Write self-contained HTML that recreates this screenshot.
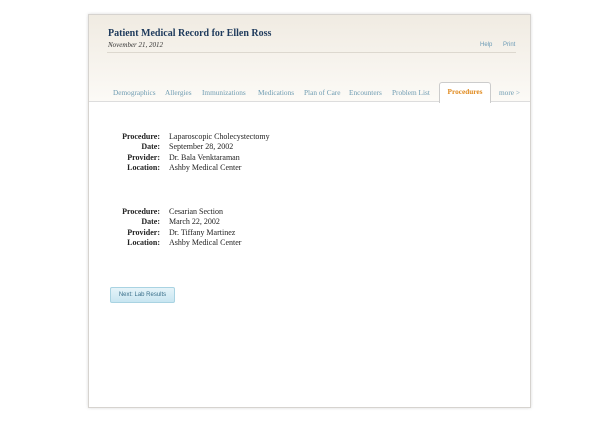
<!DOCTYPE html>
<html><head><style>
body{margin:0;width:615px;height:424px;background:#fff;position:relative;font-family:"Liberation Serif",serif;overflow:hidden}
.card{position:absolute;left:88px;top:14px;width:441px;height:392px;border:1px solid #d6d3cf;box-shadow:0 0 3px rgba(0,0,0,.15);background:#fff}
.hdr{position:absolute;left:0;top:0;width:441px;height:86px;background:linear-gradient(#f0ebe2,#fcfaf6)}
.t{position:absolute;left:19px;top:13px;font-size:10px;font-weight:bold;color:#1e3a5c}
.d{position:absolute;left:19px;top:26px;font-size:7px;font-style:italic;color:#333}
.line{position:absolute;left:18px;top:37px;width:409px;border-top:1px solid #ddd8cf}
.hp{position:absolute;top:27px;font-family:"Liberation Sans",sans-serif;font-size:6px;color:#6a9ab5}
.tab{position:absolute;top:73px;font-size:7.3px;color:#6f9cb2}
.act{position:absolute;left:350px;top:67px;width:50px;height:20px;background:#fff;border:1px solid #ccc;border-bottom:none;border-radius:3px 3px 0 0;color:#e08a1e;font-weight:bold;font-size:7.3px;text-align:center;line-height:18px}
.bl{position:absolute;left:0;top:86px;width:441px;border-top:1px solid #ddd}
.row{position:absolute;font-size:8px;color:#222;line-height:10.4px}
.btn{position:absolute;left:21px;top:272px;width:63px;height:14px;border:1px solid #a9d3e2;border-radius:2px;background:linear-gradient(#e6f4f9,#c8e6f1);font-family:"Liberation Sans",sans-serif;font-size:6px;color:#3a6f8a;text-align:center;line-height:14px}
</style></head><body>
<div class="card">
<div class="hdr"></div>
<div class="t">Patient Medical Record for Ellen Ross</div>
<div class="d">November 21, 2012</div>
<div class="hp" style="left:391px">Help</div><div class="hp" style="left:414px">Print</div>
<div class="line"></div>
<div class="bl"></div>
<div class="tab" style="left:24px">Demographics</div>
<div class="tab" style="left:76px">Allergies</div>
<div class="tab" style="left:113px">Immunizations</div>
<div class="tab" style="left:169px">Medications</div>
<div class="tab" style="left:215px">Plan of Care</div>
<div class="tab" style="left:260px">Encounters</div>
<div class="tab" style="left:303px">Problem List</div>
<div class="act">Procedures</div>
<div class="tab" style="left:410px">more &gt;</div>
<div class="row" style="left:0;top:117px;width:441px">
<div style="position:absolute;left:0;width:71px;text-align:right;font-weight:bold">Procedure:<br>Date:<br>Provider:<br>Location:</div>
<div style="position:absolute;left:80px;white-space:nowrap">Laparoscopic Cholecystectomy<br>September 28, 2002<br>Dr. Bala Venktaraman<br>Ashby Medical Center</div></div>
<div class="row" style="left:0;top:192px;width:441px">
<div style="position:absolute;left:0;width:71px;text-align:right;font-weight:bold">Procedure:<br>Date:<br>Provider:<br>Location:</div>
<div style="position:absolute;left:80px;white-space:nowrap">Cesarian Section<br>March 22, 2002<br>Dr. Tiffany Martinez<br>Ashby Medical Center</div></div>
<div class="btn">Next: Lab Results</div>
</div>
</body></html>
